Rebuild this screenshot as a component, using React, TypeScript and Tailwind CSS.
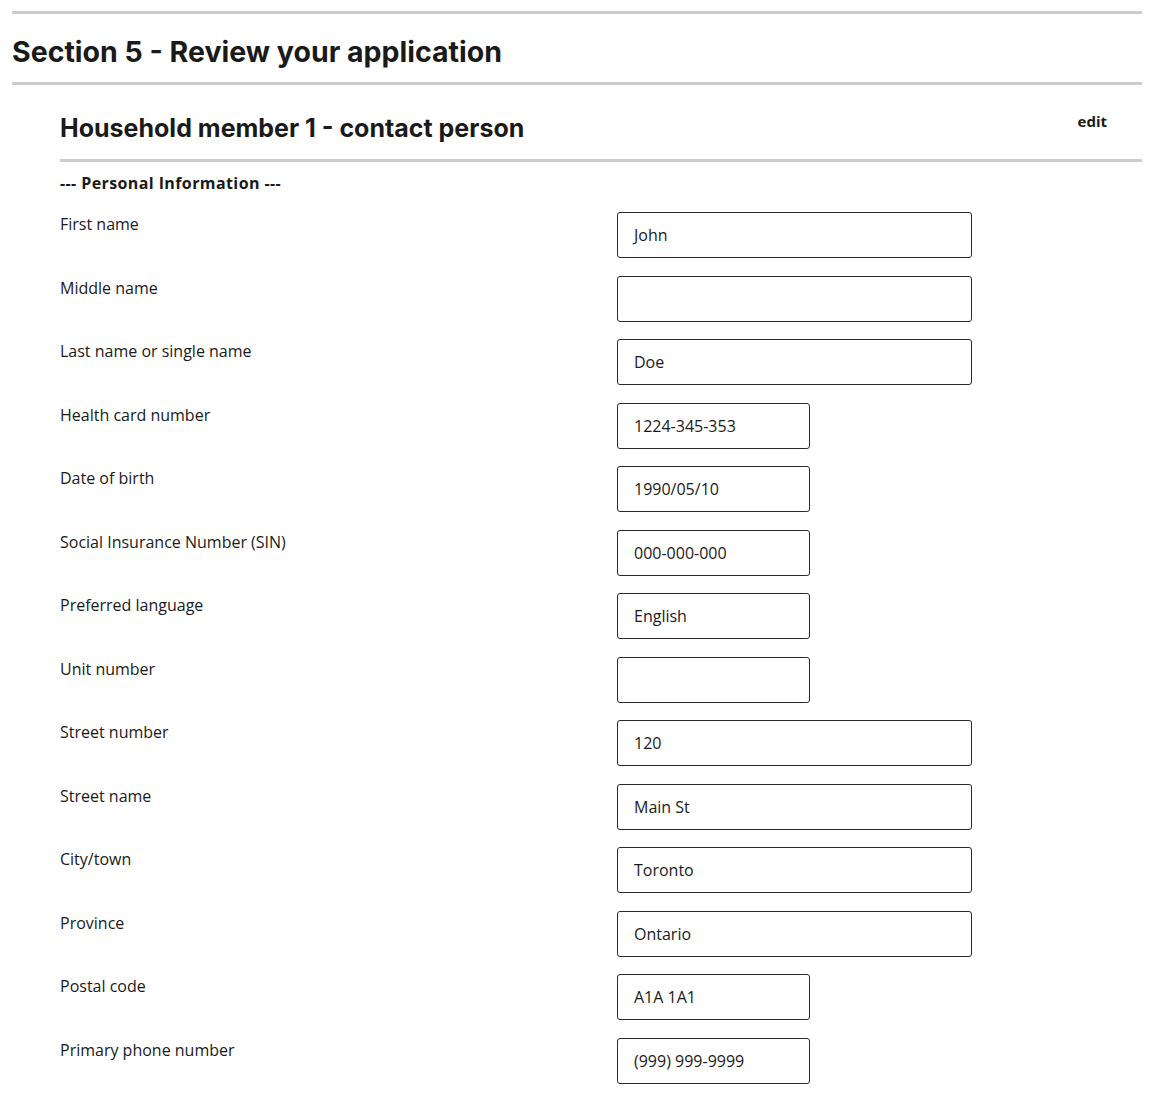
import React from "react";

const rows: { label: string; value: string; short?: boolean }[] = [
  { label: "First name", value: "John" },
  { label: "Middle name", value: "" },
  { label: "Last name or single name", value: "Doe" },
  { label: "Health card number", value: "1224-345-353", short: true },
  { label: "Date of birth", value: "1990/05/10", short: true },
  { label: "Social Insurance Number (SIN)", value: "000-000-000", short: true },
  { label: "Preferred language", value: "English", short: true },
  { label: "Unit number", value: "", short: true },
  { label: "Street number", value: "120" },
  { label: "Street name", value: "Main St" },
  { label: "City/town", value: "Toronto" },
  { label: "Province", value: "Ontario" },
  { label: "Postal code", value: "A1A 1A1", short: true },
  { label: "Primary phone number", value: "(999) 999-9999", short: true },
];

export default function App() {
  return (
    <div className="bg-white text-[#1a1a1a] pl-3 pr-3 pt-[11px]" style={{ fontFamily: '"Open Sans", sans-serif' }}>
      <div className="h-[3px] bg-[#cccccc]" />
      <h1
        className="text-[28.5px] font-bold leading-[34px] mt-[21px] mb-[13px] text-[#1a1a1a]"
        style={{ fontFamily: 'Inter, sans-serif' }}
      >
        Section 5 - Review your application
      </h1>
      <div className="h-[3px] bg-[#cccccc]" />
      <div className="pl-12">
        <div className="flex items-start justify-between pt-[28px] pb-[16px]">
          <h2 className="text-[25px] font-bold leading-[30px]" style={{ fontFamily: 'Inter, sans-serif' }}>
            Household member 1 - contact person
          </h2>
          <span className="text-[15px] font-bold mr-[35px] leading-[20px] -mt-[2px]">edit</span>
        </div>
        <div className="h-[3px] bg-[#cccccc]" />
        <div className="text-[16px] font-bold mt-[11px] leading-[20px] tracking-[0.4px]">--- Personal Information ---</div>
        <div className="mt-[19px]">
          {rows.map((r) => (
            <div key={r.label} className="flex items-start h-[63.5px]">
              <div className="w-[557px] text-[16px] pt-[1px] leading-[22px]">{r.label}</div>
              <div
                className={`${r.short ? "w-[193px]" : "w-[355px]"} h-[46px] border-[1.5px] border-[#2a2a2a] rounded-[3px] flex items-center pl-4 text-[16px]`}
              >
                {r.value}
              </div>
            </div>
          ))}
        </div>
      </div>
    </div>
  );
}
